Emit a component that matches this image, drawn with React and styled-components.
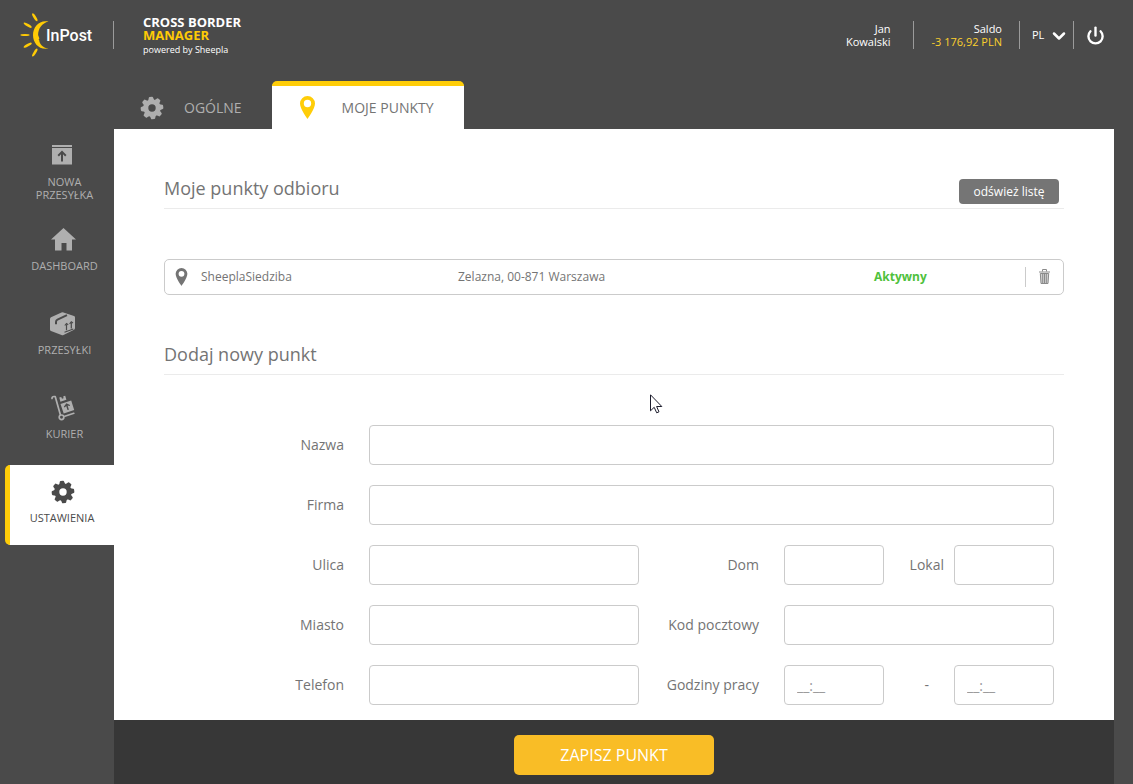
import React, { useState } from "react"
import styled, { createGlobalStyle } from "styled-components"
import { ChevronDown, Power } from "lucide-react"

const GlobalStyle = createGlobalStyle`
    * {
        box-sizing: border-box;
    }
    body {
        margin: 0;
        background: #4a4a4a;
        color: #747474;
        font-family: "Open Sans", "Noto Sans", sans-serif;
    }
    button, input, select {
        font-family: inherit;
    }
`

const Logo = () => (
    <svg width="76" height="46" viewBox="19 12 76 46" role="img" aria-label="InPost">
        <g fill="#ffcb05">
            <path d="M48.5 21.4C39 19.6 33 27 33 35s6 15.4 15.5 13.6C42.5 47.5 39.6 44 39.2 40.2l-.6-1 .8-.8-1.3-3.4C38.1 28.5 42 23 48.5 21.4z" />
            <ellipse cx="34.8" cy="17.3" rx="4.6" ry="1.3" transform="rotate(58 34.8 17.3)" />
            <ellipse cx="27.7" cy="25.2" rx="4.6" ry="1.3" transform="rotate(31 27.7 25.2)" />
            <ellipse cx="25" cy="35" rx="4.6" ry="1.1" />
            <ellipse cx="27.7" cy="45.2" rx="4.6" ry="1.3" transform="rotate(-30 27.7 45.2)" />
            <ellipse cx="34.8" cy="52.6" rx="4.6" ry="1.3" transform="rotate(-58 34.8 52.6)" />
        </g>
        <text x="46" y="41" fill="#fff" fontFamily="Roboto, sans-serif" fontWeight="500" fontSize="16">InPost</text>
    </svg>
)

const Gear = () => (
    <svg width="24" height="24" viewBox="0 0 24 24" fill="currentColor" aria-hidden="true">
        <circle cx="12" cy="12" r="6.2" fill="none" stroke="currentColor" strokeWidth="5" />
        {[0, 45, 90, 135, 180, 225, 270, 315].map(angle => (
            <path key={angle} d="M9 4.5L9.9 1.4Q10.1.7 10.8.7h2.4q.7 0 .9.7L15 4.5z" transform={`rotate(${angle - 6} 12 12)`} />
        ))}
    </svg>
)

const Pin = ({ width = 15, height = 23 }) => (
    <svg width={width} height={height} viewBox="0 0 15 23" fill="currentColor" fillRule="evenodd" aria-hidden="true">
        <path d="M7.5 0A7.5 7.5 0 0 0 0 7.5C0 13 7.5 23 7.5 23S15 13 15 7.5A7.5 7.5 0 0 0 7.5 0zm0 3.8a3.7 3.7 0 1 1 0 7.4 3.7 3.7 0 0 1 0-7.4z" />
    </svg>
)

const NewParcel = () => (
    <svg width="22" height="22" viewBox="0 0 22 22" fill="currentColor" fillRule="evenodd" aria-hidden="true">
        <path d="M0 0h20v2H0z" />
        <path d="M0 3h20v16.5H0zM10 5.5L5.5 10l1.4 1.4L9 9.3V16.5h2V9.3l2.1 2.1L14.5 10z" />
    </svg>
)

const House = () => (
    <svg width="25" height="23" viewBox="0 0 25 23" fill="currentColor" aria-hidden="true">
        <path d="M12.5 0L25 11.5h-4V22.5h-5.5V15h-5v7.5H4V11.5H0z" />
    </svg>
)

const Parcel = () => (
    <svg width="27" height="24" viewBox="0 0 27 24" fill="none" stroke="#4a4a4a" aria-hidden="true">
        <path fill="currentColor" stroke="none" d="M0 7q0-1.2 1-1.7L11.5.5q1-.5 2 0L24 4q1 .4 1 1.5V16q0 1.3-1 1.8L13.5 23q-1 .4-2 0L1 19q-1-.5-1-1.5z" />
        <path strokeWidth="2" d="M6 12.3V10q0-1.7 1.5-2.4L17 3.2" />
        <path strokeWidth="1.2" d="M14.5 20.3l8.8-3.3M16.5 18.2v-6M21.3 16.5v-6" />
        <path strokeWidth="1.1" d="M14.8 13.5l1.7-2 1.7 1.2M19.6 11.8l1.7-2 1.7 1.2" />
    </svg>
)

const Trolley = () => (
    <svg width="24" height="26" viewBox="0 0 24 26" fill="none" stroke="currentColor" aria-hidden="true">
        <path strokeWidth="1.7" strokeLinecap="round" strokeLinejoin="round" d="M1 3.5q0-2 2-2h1.2L9.3 19.5" />
        <circle cx="10.5" cy="22.3" r="2.3" strokeWidth="1.7" />
        <path strokeWidth="1.7" strokeLinecap="round" d="M13.8 21.3l9-3" />
        <path fill="currentColor" stroke="none" d="M8.3 2.5l1.9-.6.8 1.8 1.5-.4-.2-2 1.9-.5 1.2 4-6 1.9z" />
        <path fill="currentColor" stroke="none" fillRule="evenodd" d="M9.5 8.9L20.2 5.6l3 9.5L12.7 18.5zM15.4 8.3l-2.6 3.5.9.7 1.5-1.6 1.3 4.2 1.4-.4-1.3-4.2 2.1.6.3-1.1z" />
    </svg>
)

const Trash = () => (
    <svg width="11" height="15" viewBox="0 0 11 15" fill="none" stroke="#8a8a8a" aria-hidden="true">
        <path d="M3.5 2.5V.5h4v2M0 3h11" />
        <path d="M1.3 4.5L2 14.5h7l.7-10z" fill="#d2d2d2" />
        <path d="M3.7 5v9M5.5 5v9M7.3 5v9" />
    </svg>
)

const menu = [
    { name: "NOWA PRZESYŁKA", icon: <NewParcel /> },
    { name: "DASHBOARD", icon: <House /> },
    { name: "PRZESYŁKI", icon: <Parcel /> },
    { name: "KURIER", icon: <Trolley /> },
    { name: "USTAWIENIA", icon: <Gear />, active: true }
]

const points = [
    { name: "SheeplaSiedziba", address: "Zelazna, 00-871 Warszawa", status: "Aktywny" }
]

const App = () => {
    const [lang, setLang] = useState("PL")

    const onLangChange = event => {
        setLang(event.target.value)
    }

    const onSubmit = event => {
        event.preventDefault()
    }

    return (
        <>
            <GlobalStyle />
            <Page>
                <Header>
                    <Logo />
                    <Divider $gap="18px" />
                    <Brand>
                        <BrandName>
                            CROSS BORDER<br />
                            <Accent>MANAGER</Accent>
                        </BrandName>
                        <Powered>powered by Sheepla</Powered>
                    </Brand>
                    <Account>
                        <span>Jan</span>
                        <span>Kowalski</span>
                    </Account>
                    <Divider $gap="22px" />
                    <Account>
                        <span>Saldo</span>
                        <Balance>-3 176,92 PLN</Balance>
                    </Account>
                    <Divider $gap="17px" />
                    <Language>
                        <LanguageSelect aria-label="Język" value={lang} onChange={onLangChange}>
                            <option>PL</option>
                            <option>EN</option>
                        </LanguageSelect>
                        <ChevronDown size={20} strokeWidth={3} />
                    </Language>
                    <Divider $gap="0" />
                    <PowerButton type="button" aria-label="Wyloguj">
                        <Power size={19} strokeWidth={3} />
                    </PowerButton>
                </Header>
                <Tabs>
                    <Tab href="#ogolne">
                        <TabIcon><Gear /></TabIcon>
                        OGÓLNE
                    </Tab>
                    <Tab href="#punkty" $active>
                        <TabIcon $active><Pin /></TabIcon>
                        MOJE PUNKTY
                    </Tab>
                </Tabs>
                <Body>
                    <Sidebar>
                        {menu.map(item => (
                            <MenuItem key={item.name} href="#menu" $active={item.active}>
                                <MenuIcon>{item.icon}</MenuIcon>
                                <MenuLabel $active={item.active}>{item.name}</MenuLabel>
                            </MenuItem>
                        ))}
                    </Sidebar>
                    <Content onSubmit={onSubmit}>
                        <Panel>
                            <Section>
                                <Title>Moje punkty odbioru</Title>
                                <Refresh type="button">odśwież listę</Refresh>
                            </Section>
                            <PointList>
                                {points.map(point => (
                                    <Point key={point.name}>
                                        <PointIcon><Pin width={13} height={18} /></PointIcon>
                                        <PointText>{point.name}</PointText>
                                        <PointText>{point.address}</PointText>
                                        <Status>{point.status}</Status>
                                        <Remove type="button" aria-label="Usuń"><Trash /></Remove>
                                    </Point>
                                ))}
                            </PointList>
                            <Section>
                                <Title>Dodaj nowy punkt</Title>
                            </Section>
                            <Fields>
                                <Label htmlFor="nazwa">Nazwa</Label>
                                <Input id="nazwa" $wide />
                                <Label htmlFor="firma">Firma</Label>
                                <Input id="firma" $wide />
                                <Label htmlFor="ulica">Ulica</Label>
                                <Input id="ulica" />
                                <Label htmlFor="dom">Dom</Label>
                                <Pair>
                                    <Input id="dom" />
                                    <Label htmlFor="lokal" $inset="10px">Lokal</Label>
                                    <Input id="lokal" />
                                </Pair>
                                <Label htmlFor="miasto">Miasto</Label>
                                <Input id="miasto" />
                                <Label htmlFor="kod">Kod pocztowy</Label>
                                <Input id="kod" />
                                <Label htmlFor="telefon">Telefon</Label>
                                <Input id="telefon" />
                                <Label htmlFor="od">Godziny pracy</Label>
                                <Pair>
                                    <Input id="od" placeholder="__:__" />
                                    <Label htmlFor="do" $inset="25px">-</Label>
                                    <Input id="do" placeholder="__:__" />
                                </Pair>
                            </Fields>
                            <Cursor width="13" height="20" viewBox="0 0 13 20" aria-hidden="true">
                                <path d="M.5.8v16l3.7-3.5 2.5 5.5 2.3-1-2.4-5.3h5.2z" fill="#fff" stroke="#1c1c2c" />
                            </Cursor>
                        </Panel>
                        <Footer>
                            <Save type="submit">ZAPISZ PUNKT</Save>
                        </Footer>
                    </Content>
                </Body>
            </Page>
        </>
    )
}

const Page = styled.div`
    display: flex;
    flex-direction: column;
    min-height: 100vh;
`

const Header = styled.header`
    display: flex;
    align-items: center;
    height: 81px;
    padding: 0 16px 11px 19px;
    color: #fff;
`

const Divider = styled.div`
    width: 1px;
    height: 28px;
    margin-left: ${props => props.$gap};
    background: #9b9b9b;
`

const Brand = styled.div`
    display: flex;
    flex-direction: column;
    margin: 0 auto 0 29px;
    padding-top: 3px;
`

const BrandName = styled.span`
    font-size: 13px;
    font-weight: 700;
    line-height: 13px;
`

const Accent = styled.span`
    color: #ffcb05;
`

const Powered = styled.span`
    font-size: 9px;
    line-height: 15px;
`

const Account = styled.div`
    display: flex;
    flex-direction: column;
    margin-left: 18px;
    text-align: right;
    font-size: 11px;
    line-height: 13px;
`

const Balance = styled.span`
    color: #fcd02d;
`

const Language = styled.div`
    position: relative;
    width: 53px;

    svg {
        position: absolute;
        top: 2px;
        right: 4px;
        pointer-events: none;
    }
`

const LanguageSelect = styled.select`
    display: block;
    width: 100%;
    height: 22px;
    padding: 0 0 2px 12px;
    appearance: none;
    background: none;
    border: none;
    color: #fff;
    font-size: 11px;
`

const PowerButton = styled.button`
    display: flex;
    justify-content: center;
    width: 43px;
    padding: 0;
    background: none;
    border: none;
    color: #fff;
`

const Tabs = styled.nav`
    display: flex;
    height: 48px;
    padding-left: 114px;
`

const Tab = styled.a`
    display: flex;
    align-items: center;
    padding-right: 30px;
    border-top: 5px solid ${props => props.$active ? "#ffcd08" : "transparent"};
    border-radius: 5px 5px 0 0;
    background: ${props => props.$active ? "#fff" : "none"};
    color: ${props => props.$active ? "#747474" : "#afafaf"};
    font-size: 14px;
    text-decoration: none;
`

const TabIcon = styled.span`
    display: flex;
    justify-content: center;
    width: 70px;
    padding-left: ${props => props.$active ? "2px" : "6px"};
    color: ${props => props.$active ? "#ffcd08" : "inherit"};
`

const Body = styled.div`
    display: flex;
    flex: 1;
    padding-right: 19px;
`

const Sidebar = styled.nav`
    display: flex;
    flex-direction: column;
    gap: 4px;
    width: 114px;
    padding-left: 5px;
`

const MenuItem = styled.a`
    display: flex;
    flex-direction: column;
    align-items: center;
    gap: 7px;
    height: 80px;
    padding-top: 14px;
    border-left: 5px solid ${props => props.$active ? "#ffcd08" : "transparent"};
    border-radius: 5px 0 0 5px;
    background: ${props => props.$active ? "#fff" : "none"};
    color: ${props => props.$active ? "#4a4a4a" : "#afafaf"};
    text-decoration: none;
`

const MenuIcon = styled.span`
    display: flex;
    align-items: center;
    height: 25px;
    padding-left: 2px;
`

const MenuLabel = styled.span`
    max-width: 80px;
    padding-left: ${props => props.$active ? "0" : "5px"};
    text-align: center;
    font-size: 11px;
    line-height: 13px;
`

const Content = styled.form`
    display: flex;
    flex: 1;
    flex-direction: column;
    min-width: 0;
`

const Panel = styled.main`
    position: relative;
    flex: 1;
    padding: 40px 50px 15px;
    background: #fff;
`

const Section = styled.div`
    display: flex;
    align-items: flex-end;
    justify-content: space-between;
    height: 40px;
    padding: 0 5px 4px 0;
    border-bottom: 1px solid #ebebeb;
`

const Title = styled.h2`
    margin: 0;
    font-size: 18px;
    font-weight: 400;
    line-height: 32px;
`

const Refresh = styled.button`
    width: 100px;
    height: 25px;
    padding: 0;
    background: #757575;
    border: none;
    border-radius: 4px;
    color: #fff;
    font-size: 12px;
`

const PointList = styled.ul`
    margin: 50px 0 40px;
    padding: 0;
    list-style: none;
`

const Point = styled.li`
    display: grid;
    grid-template-columns: 36px 257fr 416fr 151px 38px;
    align-items: center;
    height: 36px;
    border: 1px solid #cbcbcb;
    border-radius: 5px;
    font-size: 12px;
`

const PointIcon = styled.span`
    display: flex;
    padding-left: 10px;
`

const PointText = styled.span`
    padding-bottom: 2px;
`

const Status = styled(PointText)`
    color: #4fc13c;
    font-weight: 700;
`

const Remove = styled.button`
    display: flex;
    align-items: center;
    justify-content: center;
    height: 20px;
    padding: 0 0 2px;
    background: none;
    border: none;
    border-left: 1px solid #cbcbcb;
`

const Fields = styled.div`
    display: grid;
    grid-template-columns: 180px minmax(0, 1fr) 95px minmax(0, 1fr);
    gap: 20px 25px;
    margin-top: 50px;
    padding-right: 10px;
`

const Pair = styled.div`
    display: grid;
    grid-template-columns: 1fr 70px 1fr;
`

const Label = styled.label`
    padding-right: ${props => props.$inset || "0"};
    text-align: right;
    font-size: 14px;
    line-height: 40px;
    white-space: nowrap;
`

const Input = styled.input`
    grid-column: ${props => props.$wide ? "span 3" : "auto"};
    width: 100%;
    height: 40px;
    padding: 0 12px;
    background: #fff;
    border: 1px solid #cbcbcb;
    border-radius: 4px;
    color: #747474;
    font-size: 14px;

    &::placeholder {
        color: #999;
    }
`

const Cursor = styled.svg`
    position: absolute;
    top: 265px;
    left: 536px;
    pointer-events: none;
`

const Footer = styled.footer`
    display: flex;
    justify-content: center;
    padding: 15px 0 9px;
    background: #373737;
`

const Save = styled.button`
    width: 200px;
    height: 40px;
    background: #f9bd26;
    border: none;
    border-radius: 5px;
    color: #fff;
    font-size: 16px;
`

export default App
